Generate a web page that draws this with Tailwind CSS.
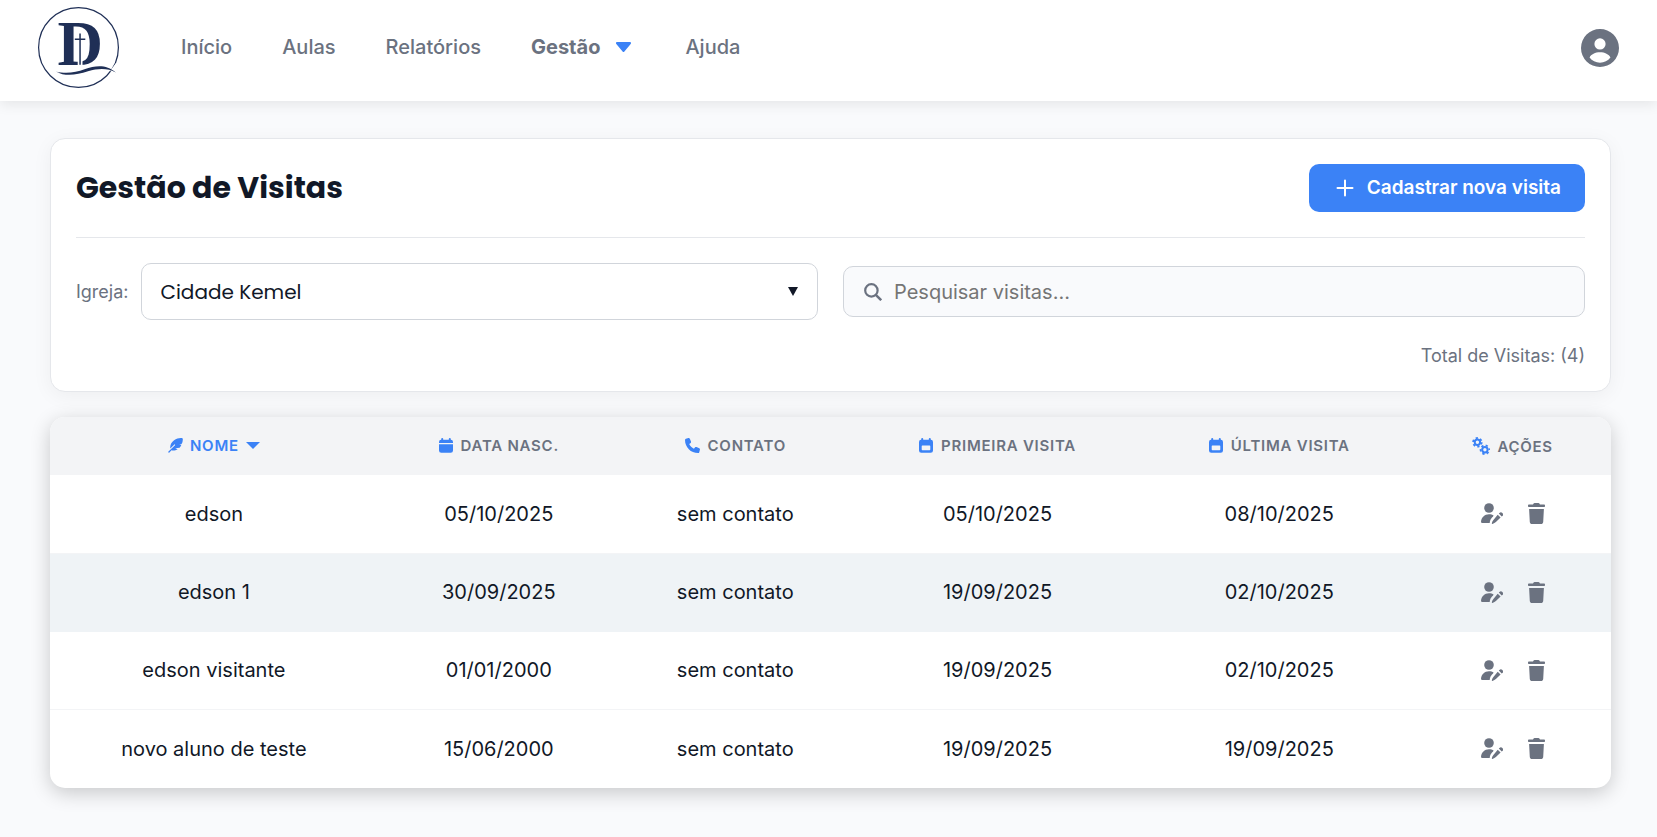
<!DOCTYPE html>
<html lang="pt-BR">
<head>
<meta charset="utf-8">
<meta name="viewport" content="width=device-width, initial-scale=1">
<title>Gestão de Visitas</title>
<script src="https://cdn.jsdelivr.net/npm/@tailwindcss/browser@4"></script>
</head>
<body class="min-h-screen bg-[#f9fafc] font-[Inter,sans-serif] text-xl text-[#111827]">

<!-- Icon definitions -->
<svg class="hidden" aria-hidden="true">
  <symbol id="feather" viewBox="0 0 16 16">
    <path d="M15.700.4C13.500-.3 9.600.2 6.500 2.400 3.800 4.300 2.100 7.300 2.400 11.100L6.800 6.900a.5.500 0 0 1 .7.700L.5 14.400c-.7.700.3 1.700 1 1l2.200-2.300c2.200.5 4.700.1 6.600-1.200l-2.600-.9 4.700-.7c.9-.9 1.500-1.900 1.900-3l-2.300-.6 2.800-.6C15.500 4.300 16.100 2.100 15.700.4z"/>
  </symbol>
  <symbol id="calendar" viewBox="0 0 14 15">
    <path d="M3.200 0a1 1 0 0 1 1 1v.8h5.600V1a1 1 0 0 1 2 0v.8A2.200 2.200 0 0 1 14 4v1.100H0V4a2.200 2.200 0 0 1 2.200-2.200V1a1 1 0 0 1 1-1zM0 6.200h14v6.300a2.300 2.300 0 0 1-2.300 2.300H2.300A2.300 2.300 0 0 1 0 12.500z"/>
  </symbol>
  <symbol id="calendar-box" viewBox="0 0 14 15">
    <path fill-rule="evenodd" d="M3.200 0a1 1 0 0 1 1 1v.8h5.600V1a1 1 0 0 1 2 0v.8A2.200 2.200 0 0 1 14 4v8.500a2.300 2.300 0 0 1-2.300 2.300H2.300A2.300 2.300 0 0 1 0 12.500V4a2.200 2.200 0 0 1 2.200-2.200V1a1 1 0 0 1 1-1zM3.300 7.600a.6.600 0 0 0-.6.600v3.300c0 .4.300.7.700.7h7.200c.4 0 .7-.3.700-.7V8.200a.6.600 0 0 0-.6-.6z"/>
  </symbol>
  <symbol id="phone" viewBox="0 0 512 512">
    <path d="M164.900 24.600c-7.700-18.600-28-28.500-47.400-23.200l-88 24C12.100 30.200 0 46 0 64c0 247.400 200.600 448 448 448 18 0 33.800-12.100 38.600-29.500l24-88c5.300-19.400-4.600-39.700-23.200-47.400l-96-40c-16.300-6.800-35.200-2.100-46.300 11.600L304.700 368C234.300 334.700 177.300 277.700 144 207.300l49.300-40.300c13.700-11.200 18.400-30 11.600-46.300l-40-96z"/>
  </symbol>
  <symbol id="gears" viewBox="0 0 18 18">
    <g fill="none" stroke="currentColor">
      <circle cx="5.400" cy="5.300" r="2.700" stroke-width="2"/>
      <circle cx="5.400" cy="5.300" r="4.300" stroke-width="1.800" stroke-dasharray="2.200 2.303"/>
      <circle cx="12.900" cy="12.700" r="2.700" stroke-width="2"/>
      <circle cx="12.900" cy="12.700" r="4.300" stroke-width="1.800" stroke-dasharray="2.200 2.303" stroke-dashoffset="2"/>
    </g>
  </symbol>
  <symbol id="user-pen" viewBox="0 0 22 21">
    <circle cx="8" cy="5" r="4.800"/>
    <path d="M1.200 20A1.200 1.200 0 0 1 0 18.800C.3 14.500 3.500 11.300 8 11.300c1.900 0 3.500.4 4.600 1.100-.4.800-.9 1.500-1.600 2.200-1.200 1.200-1.900 2.500-2.100 3.900L8.700 20z"/>
    <path d="M16.700 11.700l2.900 2.900-4.700 4.500c-.9.900-2 1.400-3.400 1.800-.4.100-.8-.2-.7-.7.400-1.400.9-2.500 1.800-3.400zM17.800 10.600l.6-.5a2.060 2.060 0 0 1 3 0 2.060 2.060 0 0 1 0 2.900l-.7.600z"/>
  </symbol>
  <symbol id="trash" viewBox="0 0 17 21">
    <path d="M5 1.600 5.600.5C5.800.2 6.100 0 6.500 0h4c.4 0 .7.200.9.500l.6 1.100h4.200c.5 0 .8.400.8.900v.8c0 .4-.3.700-.7.700H.7C.3 4 0 3.700 0 3.300v-.8c0-.5.300-.9.800-.9zM1.100 6.100h14.800l-.7 12.800c-.1 1.200-1 2.100-2.200 2.100H4c-1.200 0-2.100-.9-2.200-2.100z"/>
  </symbol>
</svg>

<header class="flex items-center bg-white pt-[7px] pr-[38px] pb-[13px] pl-[38px] shadow-[0_4px_12px_rgba(0,0,0,0.08)]">
  <a href="#" aria-label="Página inicial" class="mr-[62px] shrink-0">
    <svg class="block size-[81px] text-[#1f2f56]" viewBox="0 0 81 81" fill="currentColor" aria-hidden="true">
      <circle cx="40.500" cy="40.500" r="39.900" fill="none" stroke="currentColor" stroke-width="1.200"/>
      <text x="19.500" y="58" font-family="Liberation Serif, serif" font-weight="700" font-size="63">D</text>
      <path d="M39.700 59V52h4.800v7z" fill="#fff"/>
      <path d="M41.300 26.500h1.500v5h4.500v1.600h-4.500v24.700h-1.500V33.100h-4.500v-1.600h4.500z"/>
      <path d="M72 64l6-8 3 6-4 4z" fill="#fff"/>
      <path d="M18 64.400c10 3 20 .8 28.500-2.200C58 58.200 68 57 78 65.500c-8-4.300-17-4.500-28-1.200-12 3.800-23 5.500-32 .1z"/>
    </svg>
  </a>
  <nav class="flex flex-1 items-center gap-[50px] pb-0.5 font-medium text-[#6b7280]" aria-label="Principal">
    <a href="#">Início</a>
    <a href="#">Aulas</a>
    <a href="#">Relatórios</a>
    <button type="button" class="flex items-center gap-4 pr-1 font-bold">Gestão
      <svg class="h-[10px] w-[15px] text-[#3b82f6]" viewBox="11 192 298 169" preserveAspectRatio="none" fill="currentColor" aria-hidden="true"><path d="M31.300 192h257.300c17.800 0 26.700 21.500 14.100 34.100L174.100 354.800c-7.800 7.800-20.500 7.800-28.300 0L17.200 226.100C4.600 213.500 13.500 192 31.300 192z"/></svg>
    </button>
    <a href="#">Ajuda</a>
  </nav>
  <button type="button" aria-label="Minha conta" class="text-[#6b7280]">
    <svg class="block size-[38px]" viewBox="2 2 20 20" fill="currentColor" aria-hidden="true"><path fill-rule="evenodd" d="M12 2a10 10 0 1 0 0 20 10 10 0 0 0 0-20zm0 4.900a2.950 2.950 0 1 1 0 5.900 2.950 2.950 0 0 1 0-5.900zM6.500 17c.8-1.800 3-2.800 5.500-2.800s4.700 1 5.500 2.800c-1.300 1.800-3.300 2.700-5.500 2.700S7.800 18.800 6.500 17z"/></svg>
  </button>
</header>

<main class="flex flex-col gap-[25px] pt-[37px] pr-[46px] pb-12 pl-[50px]">
  <section class="rounded-[15px] border border-[#e5e7eb] bg-white p-[25px] shadow-[0_4px_20px_rgba(0,0,0,0.05)]">
    <div class="flex items-center justify-between border-b border-[#e5e7eb] pb-[25px]">
      <h1 class="font-[Poppins,Inter,sans-serif] text-[30px] leading-9 font-bold">Gestão de Visitas</h1>
      <button type="button" class="flex h-12 items-center gap-[13px] rounded-[10px] bg-[#3b82f6] pr-6 pl-[27px] text-[19px] font-semibold text-white">
        <svg class="size-[18px]" viewBox="0 0 18 18" fill="none" stroke="currentColor" stroke-width="2" stroke-linecap="round" aria-hidden="true"><path d="M9 1.500v15M1.500 9h15"/></svg>
        Cadastrar nova visita
      </button>
    </div>
    <div class="grid grid-cols-2 items-center gap-[25px] pt-[25px]">
      <div class="flex items-center gap-3">
        <label for="igreja" class="text-lg text-[#6b7280]">Igreja:</label>
        <div class="relative flex-1">
          <select id="igreja" class="block h-[57px] w-full appearance-none rounded-[10px] border border-[#d1d5db] bg-white px-[19px] font-[Poppins,Inter,sans-serif] text-xl">
            <option>Cidade Kemel</option>
          </select>
          <svg class="pointer-events-none absolute top-6 right-5 h-[9px] w-[10px]" viewBox="0 0 10 9" fill="currentColor" aria-hidden="true"><path d="M0 0h10L5 9z"/></svg>
        </div>
      </div>
      <label class="flex h-[51px] items-center gap-3 rounded-[10px] border border-[#d1d5db] bg-[#f9fafc] px-5">
        <svg class="size-[18px] shrink-0 text-[#6b7280]" viewBox="0 0 18 18" fill="none" stroke="currentColor" aria-hidden="true"><circle cx="7.400" cy="7.400" r="6.200" stroke-width="2.200"/><path d="M11.800 11.800l5.400 5.400" stroke-width="2.500"/></svg>
        <input type="search" aria-label="Pesquisar visitas" placeholder="Pesquisar visitas..." class="min-w-0 flex-1 bg-transparent outline-none placeholder:text-[#757575]">
      </label>
    </div>
    <p class="pt-[25px] text-right text-lg leading-[21px] text-[#6b7280]">Total de Visitas: (4)</p>
  </section>

  <div class="overflow-hidden rounded-[15px] bg-white shadow-[0_5px_20px_rgba(0,0,0,0.2)]">
    <table class="w-full table-fixed text-center">
      <colgroup>
        <col class="w-[21%]"><col class="w-[15.500%]"><col class="w-[14.800%]"><col class="w-[18.800%]"><col class="w-[17.300%]"><col class="w-[12.600%]">
      </colgroup>
      <thead class="bg-[#f3f4f6] text-[15px] tracking-wider text-[#6b7280]">
        <tr class="h-[58px]">
          <th scope="col" class="font-semibold" aria-sort="descending">
            <button type="button" class="inline-flex items-center gap-[7px] tracking-wider text-[#3b82f6]">
              <svg class="size-[15px]" fill="currentColor" aria-hidden="true"><use href="#feather"/></svg>
              NOME
              <svg class="h-[7px] w-[14px]" viewBox="0 0 14 7" fill="currentColor" aria-hidden="true"><path d="M0 0h14L7 7z"/></svg>
            </button>
          </th>
          <th scope="col" class="font-semibold"><span class="inline-flex items-center gap-2"><svg class="h-[15px] w-[14px] text-[#3b82f6]" fill="currentColor" aria-hidden="true"><use href="#calendar"/></svg>DATA NASC.</span></th>
          <th scope="col" class="font-semibold"><span class="inline-flex items-center gap-2"><svg class="size-[15px] text-[#3b82f6]" fill="currentColor" aria-hidden="true"><use href="#phone"/></svg>CONTATO</span></th>
          <th scope="col" class="font-semibold"><span class="inline-flex items-center gap-2"><svg class="h-[15px] w-[14px] text-[#3b82f6]" fill="currentColor" aria-hidden="true"><use href="#calendar-box"/></svg>PRIMEIRA VISITA</span></th>
          <th scope="col" class="font-semibold"><span class="inline-flex items-center gap-2"><svg class="h-[15px] w-[14px] text-[#3b82f6]" fill="currentColor" aria-hidden="true"><use href="#calendar-box"/></svg>ÚLTIMA VISITA</span></th>
          <th scope="col" class="font-semibold"><span class="flex items-center justify-center gap-[7px]"><svg class="size-[18px] text-[#3b82f6]" fill="currentColor" aria-hidden="true"><use href="#gears"/></svg>AÇÕES</span></th>
        </tr>
      </thead>
      <tbody>
        <tr class="h-[78px] border-b border-[#f3f4f6]">
          <td>edson</td><td>05/10/2025</td><td>sem contato</td><td>05/10/2025</td><td>08/10/2025</td>
          <td><div class="flex items-center justify-center gap-[25px] text-[#6b7280]">
            <button type="button" aria-label="Editar edson"><svg class="block h-[21px] w-[22px]" fill="currentColor"><use href="#user-pen"/></svg></button>
            <button type="button" aria-label="Excluir edson"><svg class="block h-[21px] w-[17px]" fill="currentColor"><use href="#trash"/></svg></button>
          </div></td>
        </tr>
        <tr class="h-[78px] border-y border-[#eff3f6] bg-[#eff3f6]">
          <td>edson 1</td><td>30/09/2025</td><td>sem contato</td><td>19/09/2025</td><td>02/10/2025</td>
          <td><div class="flex items-center justify-center gap-[25px] text-[#6b7280]">
            <button type="button" aria-label="Editar edson 1"><svg class="block h-[21px] w-[22px]" fill="currentColor"><use href="#user-pen"/></svg></button>
            <button type="button" aria-label="Excluir edson 1"><svg class="block h-[21px] w-[17px]" fill="currentColor"><use href="#trash"/></svg></button>
          </div></td>
        </tr>
        <tr class="h-[78px] border-b border-[#f3f4f6]">
          <td>edson visitante</td><td>01/01/2000</td><td>sem contato</td><td>19/09/2025</td><td>02/10/2025</td>
          <td><div class="flex items-center justify-center gap-[25px] text-[#6b7280]">
            <button type="button" aria-label="Editar edson visitante"><svg class="block h-[21px] w-[22px]" fill="currentColor"><use href="#user-pen"/></svg></button>
            <button type="button" aria-label="Excluir edson visitante"><svg class="block h-[21px] w-[17px]" fill="currentColor"><use href="#trash"/></svg></button>
          </div></td>
        </tr>
        <tr class="h-[79px]">
          <td>novo aluno de teste</td><td>15/06/2000</td><td>sem contato</td><td>19/09/2025</td><td>19/09/2025</td>
          <td><div class="flex items-center justify-center gap-[25px] text-[#6b7280]">
            <button type="button" aria-label="Editar novo aluno de teste"><svg class="block h-[21px] w-[22px]" fill="currentColor"><use href="#user-pen"/></svg></button>
            <button type="button" aria-label="Excluir novo aluno de teste"><svg class="block h-[21px] w-[17px]" fill="currentColor"><use href="#trash"/></svg></button>
          </div></td>
        </tr>
      </tbody>
    </table>
  </div>
</main>
</body>
</html>
